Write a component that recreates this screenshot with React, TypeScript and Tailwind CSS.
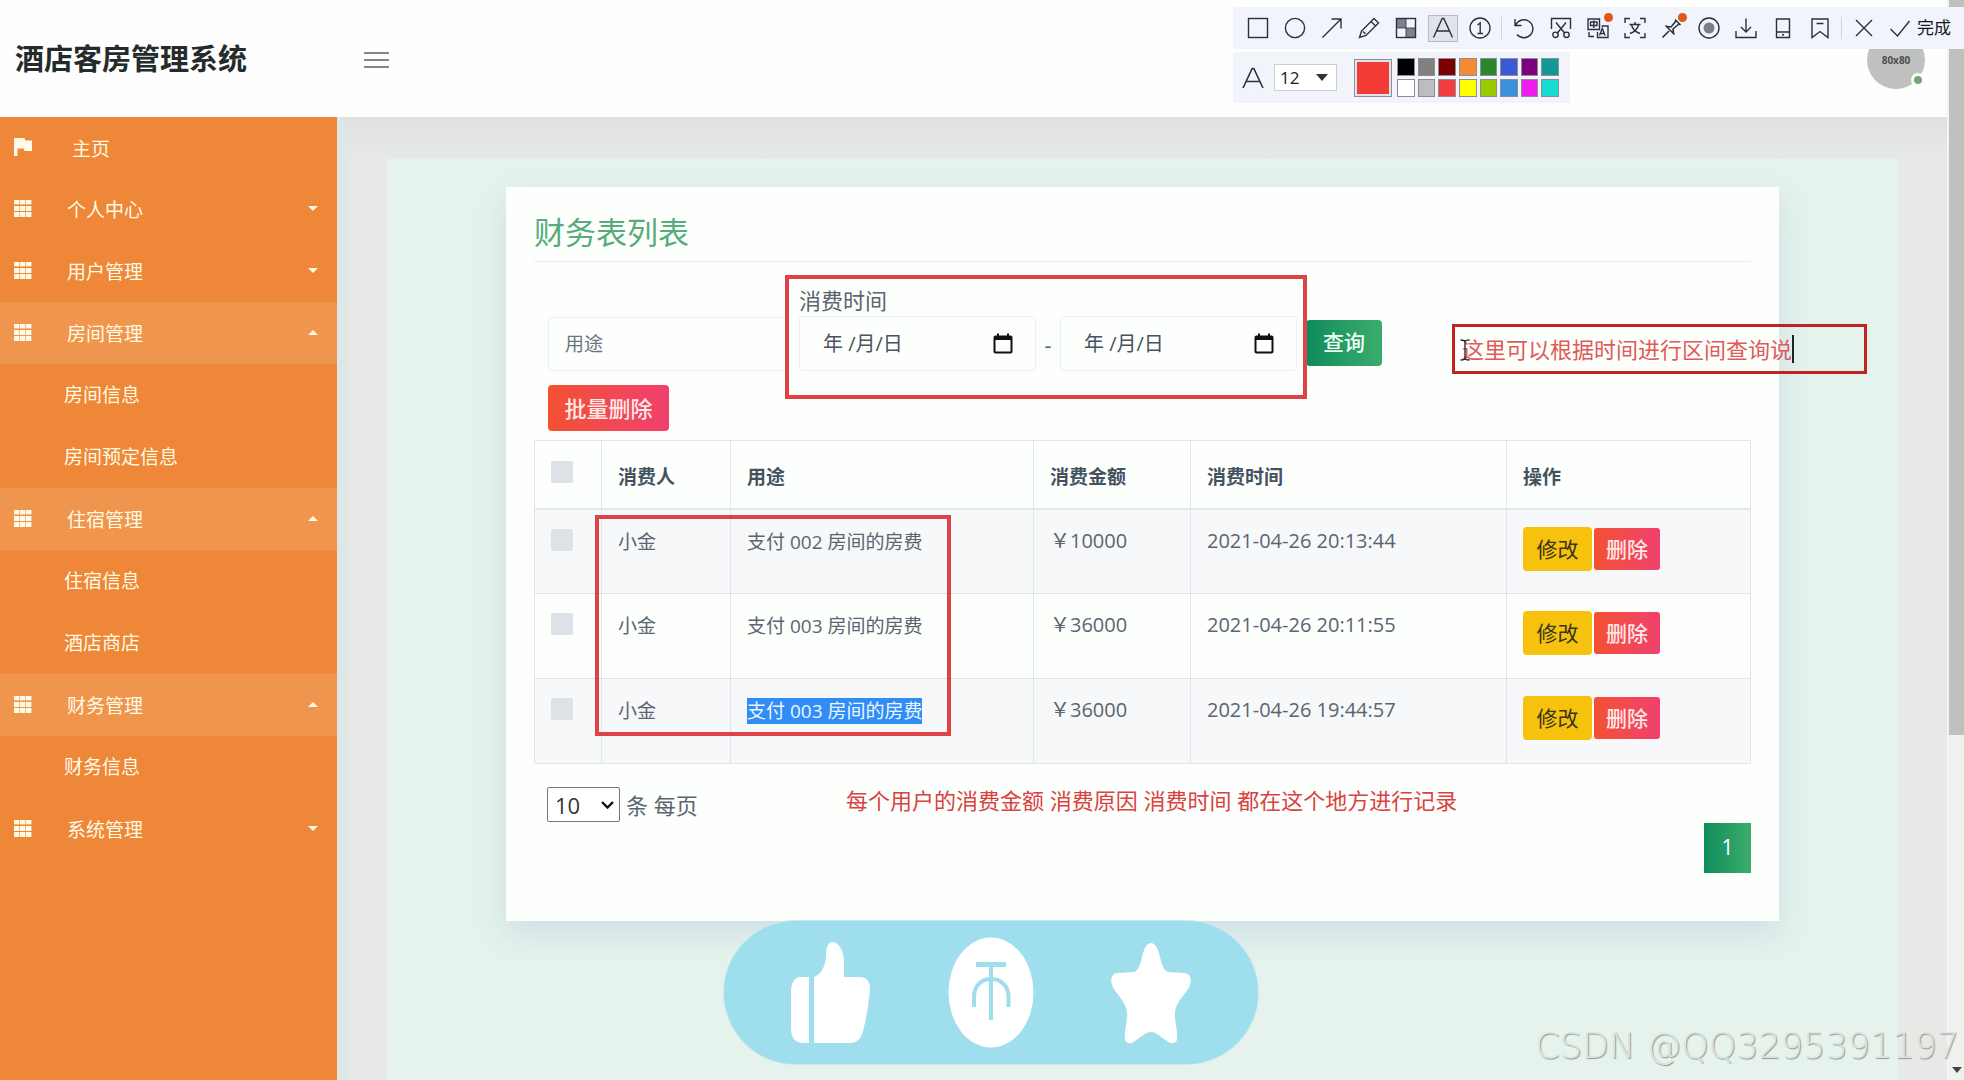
import React from 'react';

type MenuItem = {
  label: string;
  open?: boolean;
  children?: string[];
};

const menu: MenuItem[] = [
  { label: '个人中心' },
  { label: '用户管理' },
  { label: '房间管理', open: true, children: ['房间信息', '房间预定信息'] },
  { label: '住宿管理', open: true, children: ['住宿信息', '酒店商店'] },
  { label: '财务管理', open: true, children: ['财务信息'] },
  { label: '系统管理' },
];

const rows = [
  { id: 1, user: '小金', usage: '支付 002 房间的房费', amount: '￥10000', time: '2021-04-26 20:13:44' },
  { id: 2, user: '小金', usage: '支付 003 房间的房费', amount: '￥36000', time: '2021-04-26 20:11:55' },
  { id: 3, user: '小金', usage: '支付 003 房间的房费', amount: '￥36000', time: '2021-04-26 19:44:57', selected: true },
];

const swatches = [
  'bg-black', 'bg-[#808080]', 'bg-[#7b0000]', 'bg-[#f58a35]', 'bg-[#2c862c]', 'bg-[#3b58d6]', 'bg-[#7d0080]', 'bg-[#119a95]',
  'bg-white', 'bg-[#bdbdbd]', 'bg-[#f23d3f]', 'bg-[#ffff00]', 'bg-[#98cb00]', 'bg-[#3a90dc]', 'bg-[#f01df0]', 'bg-[#18dcd2]',
];

const GridIcon = () => (
  <svg viewBox="0 0 18 17" className="w-[18px] h-[17px]" fill="currentColor">
    {[0, 6, 12].map((y) =>
      [0, 6, 12].map((x) => <rect key={`${x}-${y}`} x={x} y={y} width="5.4" height={y === 0 ? 4.4 : 5} />)
    )}
  </svg>
);

const Caret: React.FC<{ up?: boolean }> = ({ up }) => (
  <svg viewBox="0 0 10 5" className="w-[10px] h-[5px] mb-[2px]" fill="currentColor">
    <path d={up ? 'M0 5 5 0l5 5z' : 'M0 0h10L5 5z'} />
  </svg>
);

const Sidebar = () => (
  <nav className="w-[337px] shrink-0 bg-[#ee8737] text-[#fffbe6] text-[19px] leading-[24px]">
    <a href="#home" className="flex items-center h-[61px] pl-[14px]">
      <svg viewBox="0 0 18 18" className="w-[18px] h-[18px] mb-[2px]" fill="currentColor">
        <path d="M0 0h10.5l.8 2.4H18v10.5h-7.5l-.8-2.4H3.4V18H0z" />
      </svg>
      <span className="ml-[40px] mt-[2px]">主页</span>
    </a>
    {menu.map((item) => (
      <div key={item.label}>
        <button
          className={`flex w-full items-center h-[62px] pl-[14px] pr-[19px] text-left ${item.open ? 'bg-[#f0954d]' : ''}`}
        >
          <span className="mb-[2px]"><GridIcon /></span>
          <span className="ml-[35px] mt-[2px] flex-1">{item.label}</span>
          <Caret up={item.open} />
        </button>
        {item.children?.map((child) => (
          <a key={child} href="#sub" className="flex items-center h-[62px] pl-[64px]">
            {child}
          </a>
        ))}
      </div>
    ))}
  </nav>
);

const ToolIcon: React.FC<{ children: React.ReactNode; label: string; active?: boolean; dot?: boolean }> = ({
  children,
  label,
  active,
  dot,
}) => (
  <button aria-label={label} className="relative flex w-[37px] h-[42px] shrink-0 items-center justify-center">
    <span className={`flex w-[30px] h-[27px] items-center justify-center ${active ? 'bg-[#e1e3e8] border border-[#b9bbc0]' : ''}`}>
      <svg viewBox="0 0 22 22" className="w-[22px] h-[22px] shrink-0" fill="none" stroke="currentColor" strokeWidth="1.4">
        {children}
      </svg>
    </span>
    {dot && <span className="absolute right-[3px] top-[6px] w-[9px] h-[9px] rounded-full bg-[#e0561c]" />}
  </button>
);

const Divider = () => <span className="w-px h-[22px] mx-[3px] bg-[#cfd2da] shrink-0" />;

const CaptureToolbar = () => (
  <div className="absolute right-0 top-[7px] flex w-[731px] flex-col text-[#2c2f3f]">
    <div className="flex h-[42px] items-center bg-[#f1f4fb] pl-[6px]">
      <ToolIcon label="矩形"><rect x="1.5" y="1.5" width="19" height="19" /></ToolIcon>
      <ToolIcon label="椭圆"><circle cx="11" cy="11" r="9.6" /></ToolIcon>
      <ToolIcon label="箭头"><path d="M1.5 20.5 20 2M10.5 2H20v9.5" /></ToolIcon>
      <ToolIcon label="画笔"><path d="m1.5 20.5 2-6.5L16 1.5 20.5 6 8 18.5zM13 4.5 17.5 9M5 14.5 7.5 17" /></ToolIcon>
      <ToolIcon label="马赛克">
        <path d="M2 2h9v9H2zM11 11h9v9h-9z" fill="#7f828c" stroke="none" />
        <rect x="1.5" y="1.5" width="19" height="19" />
        <path d="M11 2v18M2 11h18" strokeWidth=".8" />
      </ToolIcon>
      <ToolIcon label="文字" active><path d="M1.5 20.5 10.2 1.5h1.6l8.7 19M4.5 14h13" /></ToolIcon>
      <ToolIcon label="序号"><circle cx="11" cy="11" r="10" /><path d="M8.5 8 11.2 6v10.5M8.5 16.5H14" /></ToolIcon>
      <Divider />
      <ToolIcon label="撤销"><path d="M2 2v6.5h6.5M2.5 8.5A9 9 0 1 1 4 17.500" /></ToolIcon>
      <ToolIcon label="裁剪">
        <path d="M1.5 12V1.500h19V12M6 5.500l9 11M16 5.500l-9 11" />
        <circle cx="5.5" cy="17.8" r="2.7" />
        <circle cx="16.5" cy="17.8" r="2.7" />
      </ToolIcon>
      <ToolIcon label="翻译" dot>
        <path d="M1 2h11.5v10.5H1zM3.5 5H10v3.5H3.5zM6.8 3.500V11M14.5 9H21v11.500H10.500V15M12.500 18.500l2.800-7 2.800 7M13.500 16.500h4M2 15v4.500h5" />
      </ToolIcon>
      <ToolIcon label="文字识别">
        <path d="M1 6V1.5h5M16 1.5h5V6M21 16v4.500h-5M6 20.500H1V16M5.500 7.500h11M11 5v2.500M7.500 8c1 4 4 7 8.500 8.500M14.500 8c-1 4-4 7-8.500 8.500" />
      </ToolIcon>
      <ToolIcon label="贴图" dot>
        <path d="M1.5 20.5 8 14M4.5 8.5l9 9M6 9.5l4 .5 5-6M12.500 16l-.5-4 6-5M14 2.500 19.500 8" strokeWidth="1.6" />
      </ToolIcon>
      <ToolIcon label="录屏">
        <circle cx="11" cy="11" r="10" />
        <circle cx="11" cy="11" r="5.5" fill="#7b7e8a" stroke="none" />
      </ToolIcon>
      <ToolIcon label="下载"><path d="M11 1.5v13M6 10l5 5 5-5M1 14v6.500h20V14" /></ToolIcon>
      <ToolIcon label="手机"><path d="M4.5 2h13v18.500h-13zM4.500 15h13M10 17.800h2" /></ToolIcon>
      <ToolIcon label="收藏"><path d="M3 2h16v18.500l-8-6-8 6zM7.500 6.500h7" /></ToolIcon>
      <Divider />
      <ToolIcon label="关闭"><path d="m3 3 16 16M19 3 3 19" /></ToolIcon>
      <button className="flex items-center text-[17px] leading-[24px] text-[#15171f] whitespace-nowrap">
        <svg viewBox="0 0 22 22" className="w-[22px] h-[22px] ml-[7px] mr-[6px]" fill="none" stroke="#2c2f3f" strokeWidth="1.4">
          <path d="m1.5 12 7 7L20.500 4" />
        </svg>
        完成
      </button>
    </div>
    <div className="mt-[3px] flex h-[51px] w-[337px] items-center bg-[#f1f4fb] pl-[9px]">
      <svg viewBox="0 0 22 22" className="w-[22px] h-[22px]" fill="none" stroke="currentColor" strokeWidth="1.6">
        <path d="M1 21 10.2 1.5h1.6L21 21M4.500 14.500h13" />
      </svg>
      <label className="relative ml-[10px] flex items-center">
        <select
          aria-label="字号"
          className="w-[63px] h-[27px] appearance-none border border-[#cdcfd4] bg-white pl-[5px] text-[17px] leading-[20px] text-[#222]"
        >
          <option>12</option>
        </select>
        <svg viewBox="0 0 12 7" className="pointer-events-none absolute right-[9px] w-[12px] h-[7px]" fill="#333">
          <path d="M0 0h12L6 7z" />
        </svg>
      </label>
      <button aria-label="当前颜色" className="ml-[17px] w-[38px] h-[38px] border border-[#8d8f94] bg-[#f23a37] shadow-[inset_0_0_0_2px_#dfe3ea]" />
      <div className="ml-[5px] grid w-[162px] grid-cols-8 gap-[3px]">
        {swatches.map((color) => (
          <button key={color} aria-label={color} className={`h-[18px] border border-[#8d8f94] ${color}`} />
        ))}
      </div>
    </div>
  </div>
);

const CalendarIcon = () => (
  <svg viewBox="0 0 20 22" className="w-[20px] h-[22px]" fill="none" stroke="#111">
    <rect x="1.5" y="3.5" width="17" height="16" rx="1" strokeWidth="2" />
    <path d="M1 5h18" strokeWidth="4" />
    <path d="M5 .5v3M15 .5v3" strokeWidth="2" />
  </svg>
);

const DateField: React.FC<{ label: string }> = ({ label }) => (
  <div className="flex w-[237px] h-[55px] items-center rounded-[3px] border border-[#eef1f2] pl-[23px] pr-[22px]">
    <input aria-label={label} defaultValue="年 /月/日" className="w-0 flex-1 text-[20px] leading-[26px] text-[#49535d] outline-none" />
    <button aria-label="选择日期"><CalendarIcon /></button>
  </div>
);

const CheckBox: React.FC<{ label: string }> = ({ label }) => (
  <input type="checkbox" aria-label={label} className="block w-[22px] h-[22px] appearance-none rounded-[2px] bg-[#dee1e5]" />
);

const FinanceTable = () => (
  <table className="mt-[9px] w-full table-fixed border-collapse text-left text-[19px] leading-[26px] text-[#5a6570]">
    <colgroup>
      <col className="w-[67px]" />
      <col className="w-[129px]" />
      <col className="w-[303px]" />
      <col className="w-[157px]" />
      <col className="w-[316px]" />
      <col />
    </colgroup>
    <thead>
      <tr className="h-[68px] align-top text-[#44525f]">
        <th className="border border-b-2 border-[#e3e6e8] pl-[16px] pt-[20px]"><CheckBox label="全选" /></th>
        {['消费人', '用途', '消费金额', '消费时间', '操作'].map((name) => (
          <th key={name} className="border border-b-2 border-[#e3e6e8] pl-[16px] pt-[23px] font-bold">{name}</th>
        ))}
      </tr>
    </thead>
    <tbody>
      {rows.map((row) => (
        <tr key={row.id} className="h-[85px] align-top odd:bg-[#f7f8f9]">
          <td className="border border-[#e3e6e8] pl-[16px] pt-[19px]"><CheckBox label={`选择 ${row.id}`} /></td>
          <td className="border border-[#e3e6e8] pl-[16px] pt-[19px]">{row.user}</td>
          <td className="border border-[#e3e6e8] pl-[16px] pt-[19px]">
            <span className={row.selected ? 'inline-block bg-[#318cf5] text-[#eaf6ff]' : ''}>{row.usage}</span>
          </td>
          <td className="border border-[#e3e6e8] pl-[16px] pt-[18px] text-[20px]">{row.amount}</td>
          <td className="border border-[#e3e6e8] pl-[16px] pt-[18px] text-[20px]">{row.time}</td>
          <td className="border border-[#e3e6e8] pl-[16px] pt-[17px]">
            <div className="flex items-center gap-[2px] text-[21px]">
              <button className="w-[69px] h-[44px] rounded-[4px] bg-[#f6c20e] text-[#3a3418]">修改</button>
              <button className="w-[66px] h-[42px] rounded-[3px] bg-linear-to-r from-[#f4502f] to-[#f0406c] font-medium text-[#ffe9e6]">
                删除
              </button>
            </div>
          </td>
        </tr>
      ))}
    </tbody>
  </table>
);

const FinanceCard = () => (
  <section className="relative mx-[119px] bg-[#fdfffd] px-[28px] pt-[27px] pb-[48px] shadow-[0_12px_30px_0_rgba(150,175,215,0.3)]">
    <h2 className="border-b border-[#eaeeee] pb-[11px] text-[31px] leading-[36px] text-[#57ac7b]">财务表列表</h2>

    <div className="mt-[22px] flex items-end pl-[14px] text-[#5a6570]">
      <input
        aria-label="用途"
        placeholder="用途"
        className="w-[240px] h-[54px] rounded-[3px] border border-[#eef1f2] px-[16px] text-[19px] leading-[26px] outline-none placeholder:text-[#6c757d]"
      />
      <div className="ml-[11px] flex flex-col">
        <span className="text-[22px] leading-[32px]">消费时间</span>
        <div className="flex items-center">
          <DateField label="开始日期" />
          <span className="w-[24px] text-center text-[22px] leading-[32px]">-</span>
          <DateField label="结束日期" />
        </div>
      </div>
      <button className="mb-[5px] ml-[9px] w-[76px] h-[46px] rounded-[4px] bg-linear-to-r from-[#0a8c5c] to-[#3aad6d] text-[21px] font-medium text-[#effff5]">
        查询
      </button>
    </div>
    <button className="mt-[14px] ml-[14px] block w-[121px] h-[46px] rounded-[4px] bg-linear-to-r from-[#f4502f] to-[#f0406c] text-[22px] font-medium text-[#ffe9e6]">
      批量删除
    </button>

    <FinanceTable />

    <div className="mt-[23px] flex items-center pl-[13px] text-[22px] leading-[34px] text-[#5a6570]">
      <label className="flex items-center gap-[6px]">
        <span className="relative flex items-center">
          <select className="w-[73px] h-[35px] appearance-none rounded-[2px] border border-[#767676] bg-white pl-[7px] text-[22px] leading-[32px] text-[#333]">
            <option>10</option>
          </select>
          <svg viewBox="0 0 13 8" className="pointer-events-none absolute right-[6px] w-[13px] h-[8px]" fill="none" stroke="#111" strokeWidth="2.4">
            <path d="m1 1 5.500 5.500L12 1" />
          </svg>
        </span>
        条 每页
      </label>
    </div>
    <div className="mt-px flex justify-end">
      <button className="w-[47px] h-[50px] bg-linear-to-r from-[#0a8c5c] to-[#3aad6d] text-[21px] text-white">1</button>
    </div>

    {/* annotation marks */}
    <div className="pointer-events-none absolute left-[279px] top-[88px] w-[522px] h-[124px] border-4 border-[#de4347]" />
    <div className="pointer-events-none absolute left-[89px] top-[328px] w-[356px] h-[221px] border-4 border-[#de4347]" />
    <p className="absolute left-[340px] top-[597px] whitespace-nowrap text-[22px] leading-[32px] text-[#d9423f]">
      每个用户的消费金额 消费原因 消费时间 都在这个地方进行记录
    </p>
    <div className="absolute left-[946px] top-[137px] flex w-[415px] h-[50px] items-center border-3 border-[#bf2423] pl-[7px] text-[22px] leading-[32px] text-[#e05a58]">
      <span className="whitespace-nowrap">这里可以根据时间进行区间查询说</span>
      <span className="w-[2px] h-[28px] bg-[#222]" />
      <svg viewBox="0 0 10 22" className="absolute left-[5px] top-[12px] w-[10px] h-[22px]" fill="none" stroke="#222" strokeWidth="1.3">
        <path d="M.5 1C3 1 5 1 5 3c0-2 2-2 4.500-2M5 3v16M.5 21C3 21 5 21 5 19c0 2 2 2 4.500 2" />
      </svg>
    </div>
  </section>
);

const LikeBar = () => (
  <div className="absolute left-[724px] top-[921px] flex w-[534px] h-[143px] items-center rounded-[72px] bg-[#9fdeec] shadow-[0_0_0_1px_#c4ebf2]">
    <svg viewBox="0 0 534 143" className="w-full h-full" fill="#fff">
      <path d="M76 56h9v66h-6c-8 0-12-6-12-14V70c0-8 4-14 9-14z" />
      <path d="M90 56c7-3 11-10 12-20 0-8 1-15 7-15 7 1 11 10 11 20v15h16c7 0 10 5 10 11-1 13-3 28-6 39-2 11-7 16-13 16H90z" />
      <ellipse cx="267" cy="71.5" rx="42.5" ry="55" />
      <g fill="none" stroke="#9fdeec">
        <path d="M252 43.500h30" strokeWidth="5" />
        <path d="M267 45v54M250 86V76c0-11 7-18 17-18s17.500 7 17.500 18v10" strokeWidth="4" />
      </g>
      <path d="M427 22c4 0 7 5 9 14 2 9 5 15 9 15l15 1c6 0 8 6 6 12-2 7-14 16-15 27-1 8 3 18 2 27 0 4-5 6-10 2-6-4-11-9-16-9s-10 5-16 9c-5 4-10 2-10-2-1-9 3-19 2-27-1-11-13-20-15-27-2-6 0-12 6-12l15-1c4 0 7-6 9-15 2-9 5-14 9-14z" />
    </svg>
  </div>
);

export default function App() {
  return (
    <div className="relative flex min-h-screen overflow-hidden bg-[#fdfefd] font-['Open_Sans','Noto_Sans_CJK_SC',sans-serif]">
      <div className="flex min-w-0 flex-1 flex-col">
        <header className="flex h-[117px] items-center pl-[15px] pr-[22px]">
          <h1 className="w-[349px] text-[29px] leading-[36px] font-bold text-[#252b2b]">酒店客房管理系统</h1>
          <button aria-label="菜单" className="mt-[2px] flex w-[25px] flex-col gap-[5px]">
            <span className="h-[2px] bg-[#868886]" />
            <span className="h-[2px] bg-[#868886]" />
            <span className="h-[2px] bg-[#868886]" />
          </button>
          <div className="relative ml-auto mt-[2px] flex w-[58px] h-[58px] items-center justify-center rounded-full bg-[#bfc1be] text-[10px] leading-[12px] font-bold text-[#4d4f4d]">
            80x80
            <span className="absolute bottom-[2px] right-0 w-[14px] h-[14px] rounded-full border-[3px] border-[#fdfefd] bg-[#76a377]" />
          </div>
        </header>
        <div className="flex flex-1">
          <Sidebar />
          <main className="flex flex-1 flex-col bg-[#e7e9e6] bg-linear-to-b from-[#dfe1df] to-[#e7e9e6] to-[42px] pl-[50px] pr-[49px] pt-[42px] shadow-[inset_12px_0_6px_-4px_#dde6e9]">
            <div className="flex-1 bg-[#e6f3ec] pt-[28px]">
              <FinanceCard />
            </div>
          </main>
        </div>
      </div>
      <div className="flex w-[17px] shrink-0 flex-col border-l-2 border-[#f2f4f2] bg-[#eff1ef]">
        <div className="h-[735px] bg-[#bfc1be]" />
        <svg viewBox="0 0 10 6" className="mx-auto mt-auto mb-[7px] w-[10px] h-[6px]" fill="#444">
          <path d="M0 0h10L5 6z" />
        </svg>
      </div>

      <CaptureToolbar />
      <LikeBar />
      <p className="absolute bottom-[13px] right-[5px] whitespace-nowrap font-['DejaVu_Sans',sans-serif] text-[35px] leading-[42px] font-extralight text-[#dfe4e1] [text-shadow:1px_1px_1px_#8f9592]">
        CSDN @QQ3295391197
      </p>
    </div>
  );
}
